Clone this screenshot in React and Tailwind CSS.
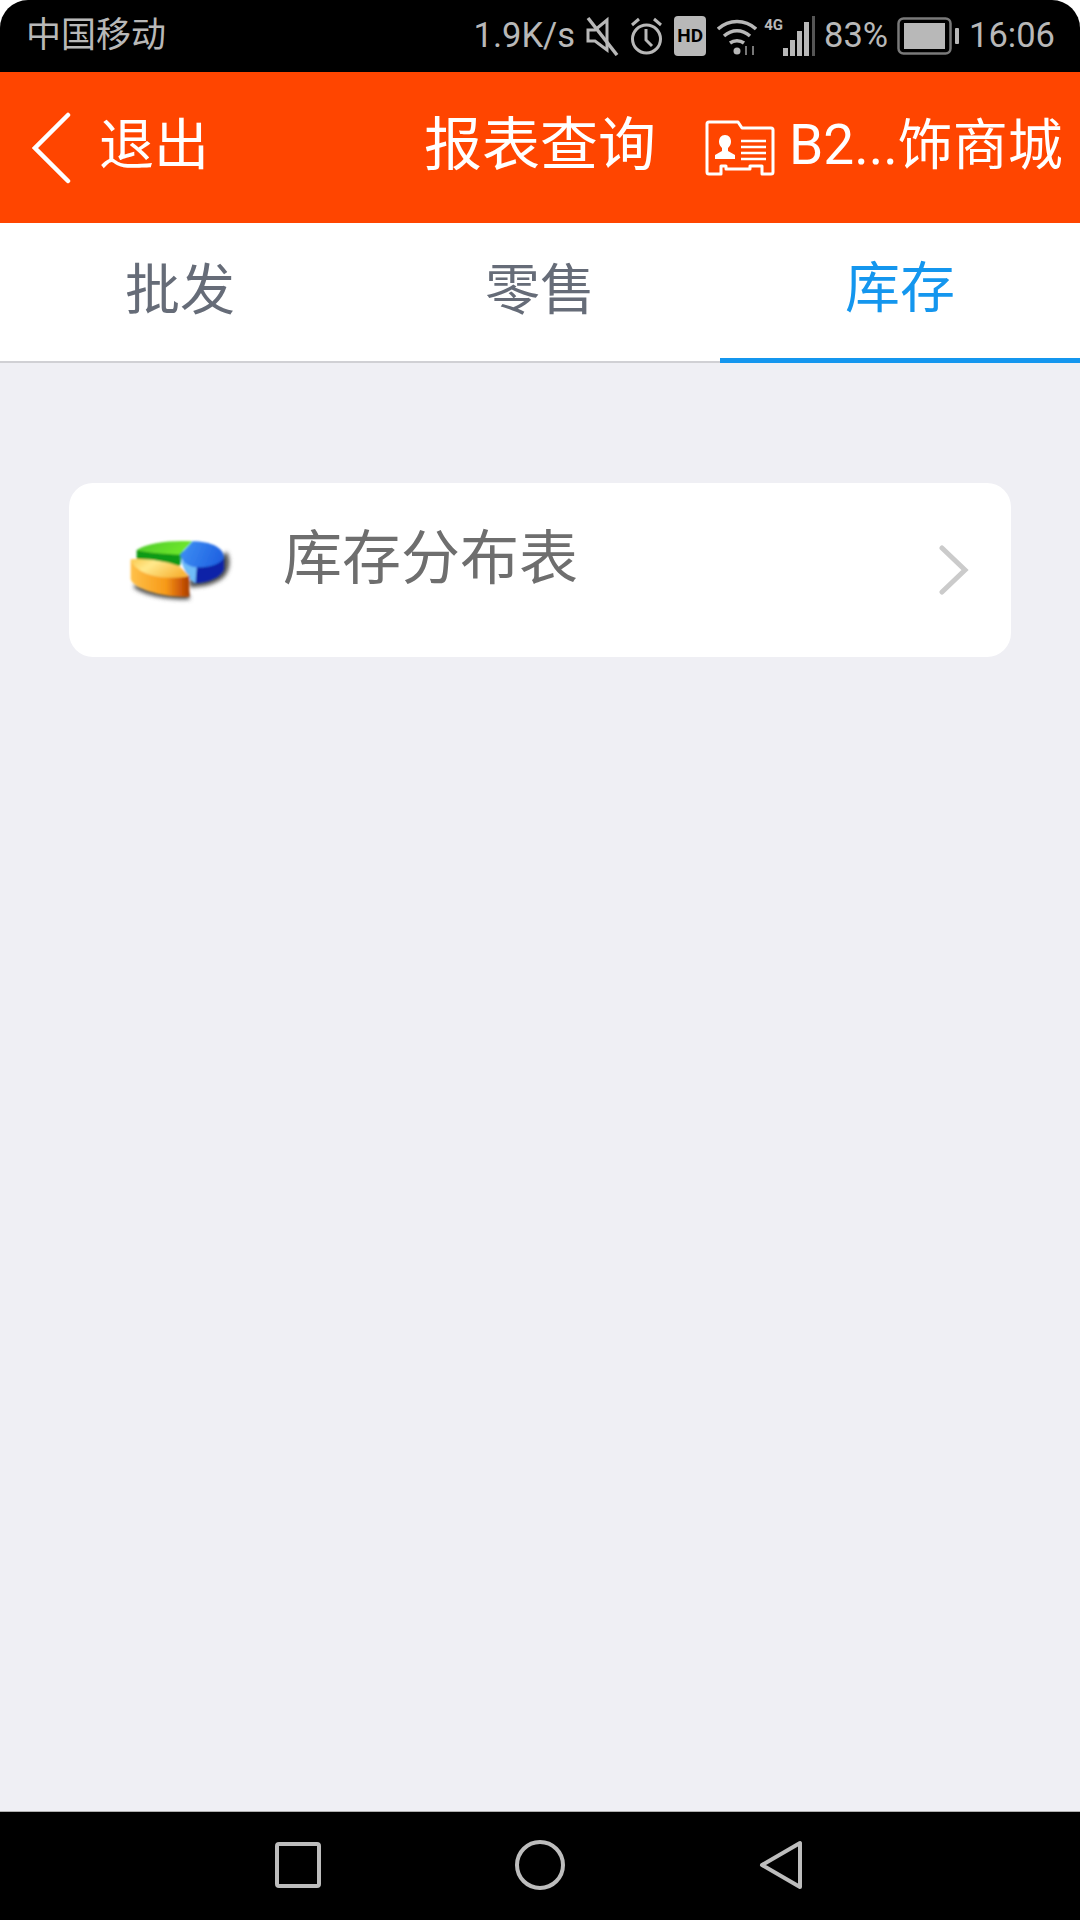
import { useState } from 'react';

const TABS = ['批发', '零售', '库存'];

function MuteIcon() {
  return (
    <svg width="34" height="40" viewBox="0 0 34 40" fill="none" stroke="#b8b8b8" strokeWidth="3">
      <path d="M3 14h7L22 4v30L10 25H3z" />
      <path d="M3 2l29 37" strokeWidth="3.5" />
    </svg>
  );
}

function AlarmIcon() {
  return (
    <svg width="33" height="40" viewBox="0 0 33 40" fill="none" stroke="#b8b8b8" strokeWidth="3">
      <circle cx="16.5" cy="23" r="14" />
      <path d="M16 13v11l6 6" />
      <path d="M2 9l7-6M31 9l-7-6" />
    </svg>
  );
}

function WifiIcon() {
  return (
    <svg width="40" height="40" viewBox="0 0 40 40" fill="none" stroke="#b8b8b8" strokeWidth="3.5">
      <path d="M1 13c11-10 27-10 38 0" />
      <path d="M7 20c8-7 18-7 26 0" />
      <path d="M13 27c4-3 10-3 14 0" />
      <circle cx="20" cy="35" r="3.5" fill="#b8b8b8" stroke="none" />
      <path d="M29 30v9M36 30v9" stroke="#777" strokeWidth="2" />
    </svg>
  );
}

function SignalIcon() {
  return (
    <svg width="34" height="40" viewBox="0 0 34 40" fill="#b8b8b8">
      <rect x="0" y="32" width="5" height="8" />
      <rect x="7" y="24" width="5" height="16" />
      <rect x="14" y="15" width="5" height="25" />
      <rect x="21" y="6" width="5" height="34" />
      <rect x="29" y="0" width="3" height="40" fill="#555" />
    </svg>
  );
}

function BatteryIcon() {
  return (
    <svg width="63" height="38" viewBox="0 0 63 38">
      <rect x="1.5" y="1.5" width="52" height="35" rx="5" fill="none" stroke="#7a7a7a" strokeWidth="2.5" />
      <rect x="7" y="6" width="41" height="26" fill="#b8b8b8" />
      <rect x="58" y="11" width="4" height="16" rx="1" fill="#b8b8b8" />
    </svg>
  );
}

function CardIcon() {
  return (
    <svg width="72" height="56" viewBox="0 0 72 56" fill="none" stroke="#fff" strokeWidth="3" strokeLinejoin="round">
      <path d="M3 4q0-2 2-2h29l4 6h29q2 0 2 2v42q0 2-2 2h-9v-8H46v3H22v-3h-5v8H5q-2 0-2-2z" />
      <path d="M21 15c4 0 6 3 6 7 0 3-2 5-3 6v3l7 4v4H11v-4l7-4v-3c-1-1-3-3-3-6 0-4 2-7 6-7z" fill="#fff" stroke="none" />
      <path d="M37 21h25M37 27h25M37 33h25M37 39h25" strokeWidth="2.5" />
    </svg>
  );
}

// hand-drawn 3d pie, coordinates follow the icon at 3x
function PieIcon() {
  return (
    <svg width="160" height="100" viewBox="0 0 480 300" className="block">
      <defs>
        <linearGradient id="pieGreen" x1="0" y1="0" x2="1" y2="0.3">
          <stop offset="0" stopColor="#4cc92c" />
          <stop offset="1" stopColor="#6fe82a" />
        </linearGradient>
        <linearGradient id="pieBlue" x1="0" y1="0" x2="1" y2="0.4">
          <stop offset="0" stopColor="#3f92f5" />
          <stop offset="1" stopColor="#1e5fe0" />
        </linearGradient>
        <linearGradient id="pieOrange" x1="0" y1="0" x2="1" y2="0">
          <stop offset="0" stopColor="#ffc14a" />
          <stop offset="0.6" stopColor="#f79a18" />
          <stop offset="0.85" stopColor="#d05c08" />
          <stop offset="1" stopColor="#a83c00" />
        </linearGradient>
        <linearGradient id="pieYellow" x1="0" y1="0" x2="1" y2="0.5">
          <stop offset="0" stopColor="#fbc94e" />
          <stop offset="0.4" stopColor="#ffe98c" />
          <stop offset="1" stopColor="#f8b63a" />
        </linearGradient>
        <filter id="pieSoft"><feGaussianBlur stdDeviation="2.5" /></filter>
        <filter id="pieShadow"><feGaussianBlur stdDeviation="6" /></filter>
      </defs>
      <g filter="url(#pieShadow)" fill="#555">
        <path d="M380 125c14 20 12 62-15 82-25 18-60 25-95 25l-5-20z" />
        <path d="M100 232c30 25 110 40 170 36l-5-20-160-25z" />
      </g>
      <g filter="url(#pieSoft)">
        <path d="M110 120v34l130 14 10-44z" fill="#0f9a12" />
        <path d="M110 120c35-22 100-30 168-26l-40 40c-45-2-90-4-128-14z" fill="url(#pieGreen)" />
        <path d="M278 94c55 0 95 20 94 50v34c-10 25-45 40-90 42l-42-86z" fill="url(#pieBlue)" />
        <path d="M290 172c35 2 70-8 82-28v34c-10 25-45 40-86 42z" fill="#0c22a8" />
        <path d="M238 134c5 20 25 36 52 38l-4 48c-20-10-38-46-48-86z" fill="#70bcf8" />
        <path d="M92 148v60c10 30 100 56 176 52v-62c-70 10-150-10-176-50z" fill="url(#pieOrange)" />
        <path d="M92 148c45-5 110 5 148 22l28 28c-70 15-160 0-176-50z" fill="url(#pieYellow)" />
      </g>
    </svg>
  );
}

export default function App() {
  const [active] = useState(2);

  return (
    <div className="w-[1080px] h-[1920px] flex flex-col bg-white overflow-hidden font-[Roboto,'Noto_Sans_CJK_SC',sans-serif]">
      <div className="h-[72px] shrink-0 bg-black rounded-t-[28px] flex items-center text-[#b8b8b8] text-[34.5px] pl-[26px] pr-[25px]">
        <span className="mr-auto text-[35px]">中国移动</span>
        <span>1.9K/s</span>
        <div className="flex items-center ml-[10px] gap-[11px]">
          <MuteIcon />
          <AlarmIcon />
          <div className="w-[32px] h-[40px] rounded-[4px] bg-[#b8b8b8] text-black text-[19px] font-bold flex items-center justify-center">HD</div>
          <WifiIcon />
        </div>
        <div className="flex items-start h-[40px] ml-[7px]">
          <span className="text-[15px] font-bold leading-[18px]">4G</span>
          <SignalIcon />
        </div>
        <span className="ml-[7px]">83%</span>
        <div className="ml-[9px]"><BatteryIcon /></div>
        <span className="ml-[9px]">16:06</span>
      </div>

      <div className="h-[151px] shrink-0 bg-[#ff4500] flex items-center text-white">
        <svg width="40" height="72" viewBox="0 0 40 72" fill="none" stroke="#fff" strokeWidth="4.5" strokeLinecap="round" className="ml-[32px]">
          <path d="M36 3L3 36l33 33" />
        </svg>
        <span className="ml-[27px] w-[325px] text-[55px] -mt-[4px]">退出</span>
        <span className="text-[58px] w-[280px] -mt-[4px]">报表查询</span>
        <CardIcon />
        <span className="ml-[13px] text-[55px] whitespace-nowrap -mt-[4px]">B2...饰商城</span>
      </div>

      <div className="h-[140px] shrink-0 grid grid-cols-3 border-b-2 border-[#d0d0d4]">
        {TABS.map((tab, i) => (
          <div
            key={tab}
            className={i === active
              ? 'flex items-center justify-center pb-[4px] text-[55px] text-[#1496ee] border-b-[5px] border-[#1496ee] -mb-[2px]'
              : 'flex items-center justify-center pb-[4px] text-[55px] text-[#666c78]'}
          >
            {tab}
          </div>
        ))}
      </div>

      <div className="flex-1 bg-[#efeff4] px-[69px] pt-[120px] border-b border-[#b0b0b0]">
        <div className="h-[174px] bg-white rounded-[24px] flex items-center">
          <div className="ml-[31px] mb-[20px]"><PieIcon /></div>
          <span className="ml-[23px] text-[59px] text-[#6e6e6e] -mt-[22px]">库存分布表</span>
          <svg width="30" height="50" viewBox="0 0 30 50" fill="none" stroke="#cbcbcb" strokeWidth="5" strokeLinecap="round" className="ml-auto mr-[42px]">
            <path d="M3 3l23 22L3 47" />
          </svg>
        </div>
      </div>

      <div className="h-[108px] shrink-0 bg-black flex items-center justify-center gap-[194px] pb-[3px] pr-[2px]">
        <svg width="46" height="46" viewBox="0 0 46 46" fill="none" stroke="#bdbdbd" strokeWidth="4" strokeLinejoin="round">
          <rect x="2" y="2" width="42" height="42" rx="2" />
        </svg>
        <svg width="50" height="50" viewBox="0 0 50 50" fill="none" stroke="#bdbdbd" strokeWidth="4">
          <circle cx="25" cy="25" r="23" />
        </svg>
        <svg width="44" height="50" viewBox="0 0 44 50" fill="none" stroke="#bdbdbd" strokeWidth="4" strokeLinejoin="round">
          <path d="M41 3v44L3 25z" />
        </svg>
      </div>
    </div>
  );
}
